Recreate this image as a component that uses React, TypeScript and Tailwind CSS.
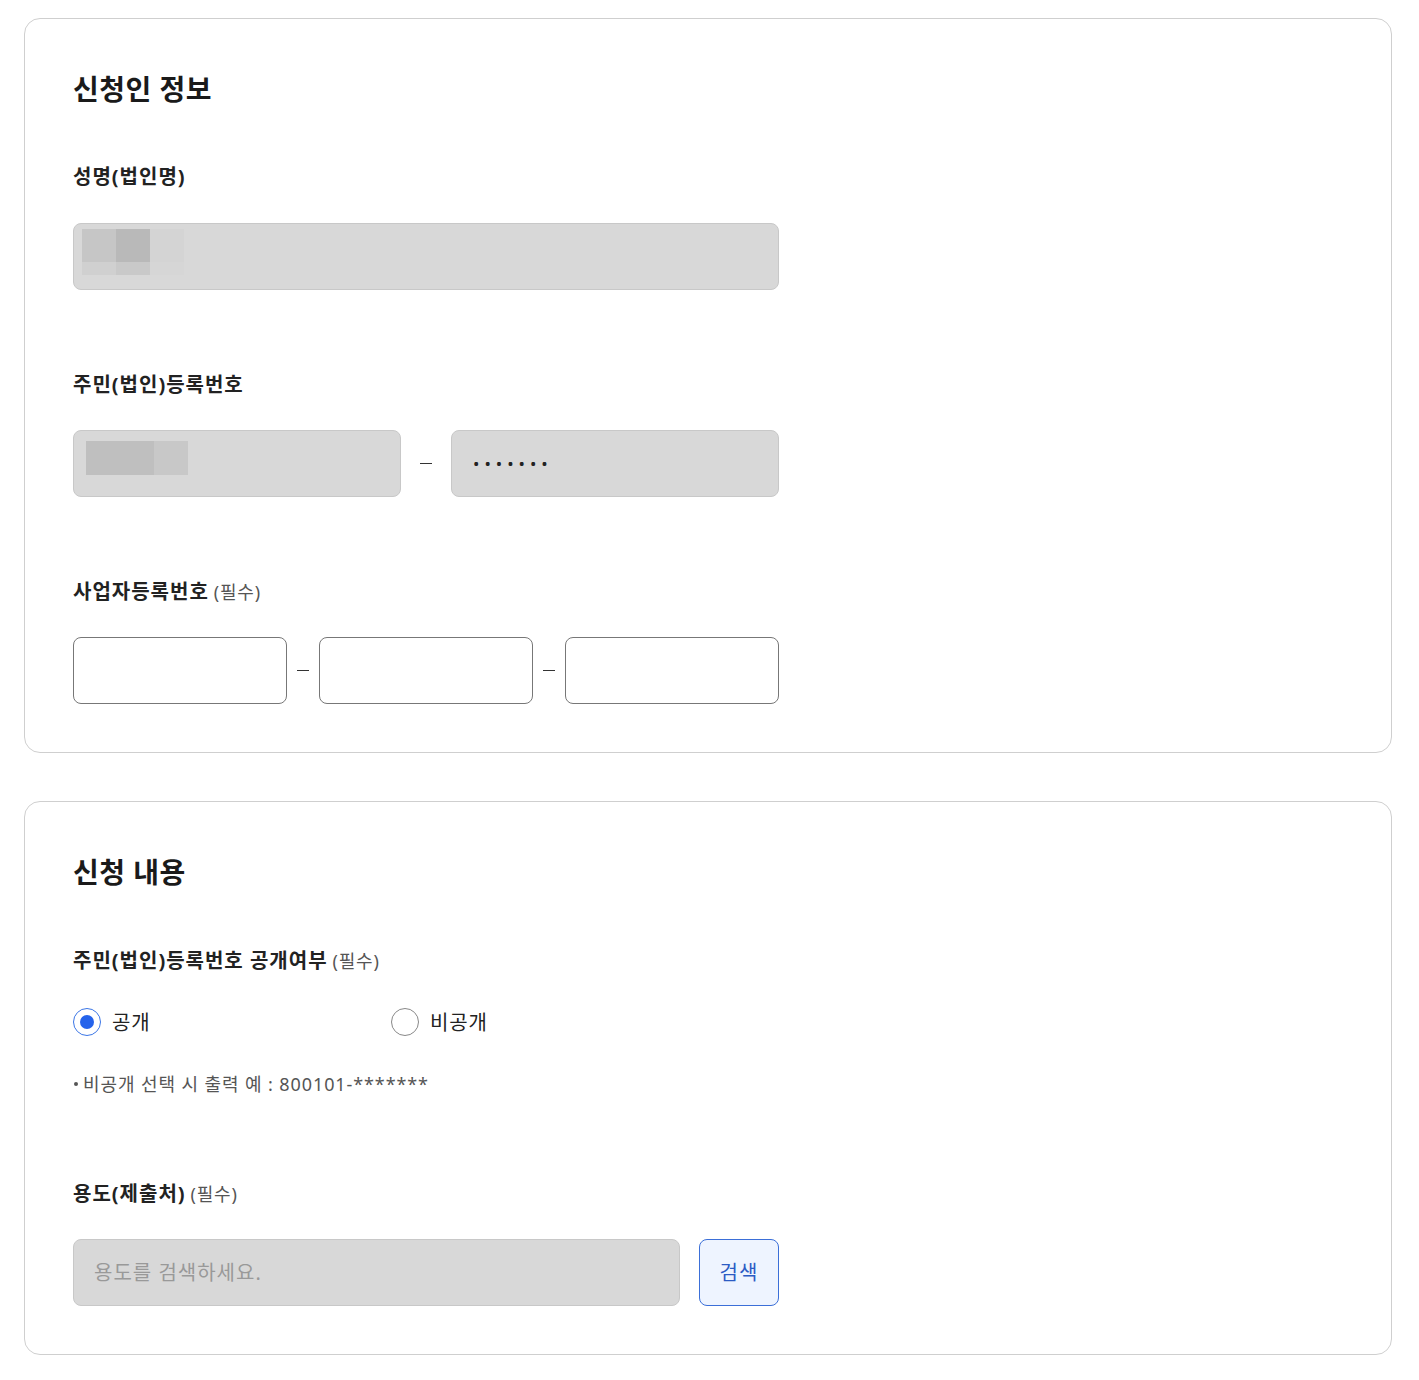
import { useState } from 'react';

const FONT = { fontFamily: '"Noto Sans", "Noto Sans CJK KR", sans-serif' };

function Label({ text, required }: { text: string; required?: boolean }) {
  return (
    <div className="h-[28px] pt-px flex items-center text-[20px] leading-[28px] font-bold text-[#222] tracking-[1px]">
      {text}
      {required && <span className="ml-[5px] text-[18px] font-normal text-[#555] tracking-[0.8px]">(필수)</span>}
    </div>
  );
}

function Dash() {
  return <span className="block w-[12px] h-px bg-[#333] shrink-0" />;
}

function Card({ title, children }: { title: string; children: React.ReactNode }) {
  return (
    <section className="border border-[#cfcfcf] rounded-[16px] bg-white pt-[52px] pb-12 px-12">
      <h2 className="h-[36px] leading-[36px] text-[28px] font-bold text-[#1a1a1a] tracking-[0.5px]">{title}</h2>
      {children}
    </section>
  );
}

export default function App() {
  const [open, setOpen] = useState<'public' | 'private'>('public');

  return (
    <div className="bg-white min-h-screen pt-[18px] pb-[26px] pl-6 pr-[27px] flex flex-col gap-[48px]" style={FONT}>
      <Card title="신청인 정보">
        <div className="w-[706px]">
          {/* 성명 */}
          <div className="mt-[55px]">
            <Label text="성명(법인명)" />
            <div className="mt-[33px] h-[67px] rounded-[8px] border border-[#c8c8c8] bg-[#d8d8d8] relative overflow-hidden">
              <div className="absolute left-[8px] top-[5px] grid grid-cols-[34px_34px_34px] grid-rows-[33px_13px]">
                <span className="bg-[#c6c6c6]" />
                <span className="bg-[#b9b9b9]" />
                <span className="bg-[#d4d4d4]" />
                <span className="bg-[#d0d0d0]" />
                <span className="bg-[#c9c9c9]" />
                <span className="bg-[#d6d6d6]" />
              </div>
            </div>
          </div>

          {/* 주민번호 */}
          <div className="mt-[80px]">
            <Label text="주민(법인)등록번호" />
            <div className="mt-[32px] flex items-center gap-[19px]">
              <div className="w-[328px] h-[67px] rounded-[8px] border border-[#c8c8c8] bg-[#d8d8d8] relative overflow-hidden">
                <div className="absolute left-[12px] top-[10px] flex h-[34px]">
                  <span className="w-[68px] bg-[#bfbfbf]" />
                  <span className="w-[34px] bg-[#c8c8c8]" />
                </div>
              </div>
              <Dash />
              <div className="w-[328px] h-[67px] rounded-[8px] border border-[#c8c8c8] bg-[#d8d8d8] flex items-center pl-[21px]">
                <span className="text-[17px] tracking-[5px] text-[#222]">•••••••</span>
              </div>
            </div>
          </div>

          {/* 사업자등록번호 */}
          <div className="mt-[80px]">
            <Label text="사업자등록번호" required />
            <div className="mt-[32px] flex items-center gap-[10px]">
              <input className="flex-1 min-w-0 h-[67px] rounded-[8px] border border-[#777] bg-white outline-none" />
              <Dash />
              <input className="flex-1 min-w-0 h-[67px] rounded-[8px] border border-[#777] bg-white outline-none" />
              <Dash />
              <input className="flex-1 min-w-0 h-[67px] rounded-[8px] border border-[#777] bg-white outline-none" />
            </div>
          </div>
        </div>
      </Card>

      <Card title="신청 내용">
        <div className="w-[706px]">
          <div className="mt-[56px]">
            <Label text="주민(법인)등록번호 공개여부" required />
            <div className="mt-[34px] flex h-[28px]">
              <button type="button" onClick={() => setOpen('public')} className="w-[318px] flex items-center gap-[11px]">
                <span className={`w-[28px] h-[28px] rounded-full border flex items-center justify-center ${open === 'public' ? 'border-[#3b76e6]' : 'border-[#888]'}`}>
                  {open === 'public' && <span className="w-[14px] h-[14px] rounded-full bg-[#2563eb]" />}
                </span>
                <span className="pt-px text-[20px] text-[#222] tracking-[0.8px]">공개</span>
              </button>
              <button type="button" onClick={() => setOpen('private')} className="flex items-center gap-[11px]">
                <span className={`w-[28px] h-[28px] rounded-full border flex items-center justify-center ${open === 'private' ? 'border-[#3b76e6]' : 'border-[#888]'}`}>
                  {open === 'private' && <span className="w-[14px] h-[14px] rounded-full bg-[#2563eb]" />}
                </span>
                <span className="pt-px text-[20px] text-[#222] tracking-[0.8px]">비공개</span>
              </button>
            </div>
            <p className="mt-[35px] h-[26px] flex items-center text-[18px] text-[#555] tracking-[0.9px]">
              <span className="w-[4px] h-[4px] rounded-full bg-[#555] ml-[1px] mr-[5px]" />
              비공개 선택 시 출력 예 : 800101-*******
            </p>
          </div>

          <div className="mt-[82px]">
            <Label text="용도(제출처)" required />
            <div className="mt-[32px] flex gap-[19px]">
              <input
                placeholder="용도를 검색하세요."
                className="w-[607px] h-[67px] rounded-[8px] border border-[#c8c8c8] bg-[#d8d8d8] pl-[20px] text-[20px] tracking-[1px] placeholder:text-[#999] outline-none"
              />
              <button type="button" className="w-[80px] h-[67px] rounded-[8px] border border-[#3b6fd8] bg-[#eef4ff] text-[20px] text-[#2b5bc4] tracking-[1px]">
                검색
              </button>
            </div>
          </div>
        </div>
      </Card>
    </div>
  );
}
